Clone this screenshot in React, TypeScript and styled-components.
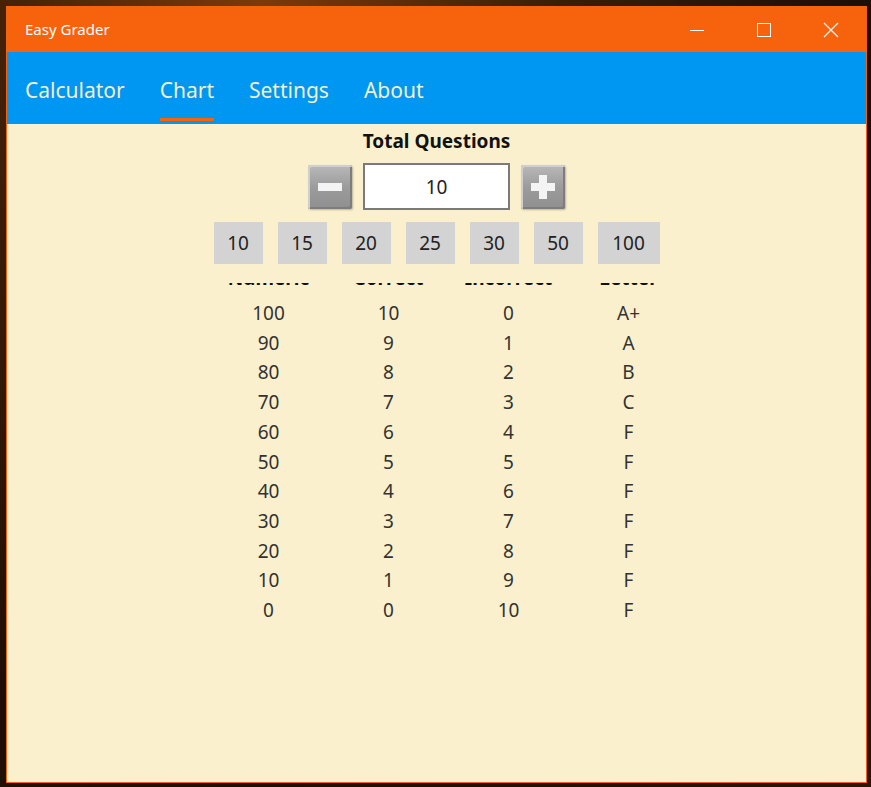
import styled, { createGlobalStyle } from "styled-components";

const GlobalStyle = createGlobalStyle`
  html, body {
    margin: 0;
    padding: 0;
    height: 100%;
  }
  body {
    background: radial-gradient(ellipse at 30% 0%, #7a3a0c 0%, #3b1d08 35%, #1e0e04 70%, #2a1507 100%);
    font-family: "Segoe UI", "Noto Sans", "Open Sans", sans-serif;
    overflow: hidden;
  }
`;

const Window = styled.div`
  display: flex;
  flex-direction: column;
  width: 861px;
  height: 777px;
  margin: 6px 0 0 6px;
  box-sizing: border-box;
  border: 1px solid #f7630c;
  background: #faf0cd;
`;

const TitleBar = styled.div`
  display: flex;
  align-items: center;
  height: 45px;
  flex-shrink: 0;
  background: #f7630c;
  color: #ffffff;
`;

const TitleText = styled.div`
  flex: 1;
  padding-left: 18px;
  font-size: 15px;
  margin-top: -1px;
`;

const CaptionButton = styled.div`
  display: flex;
  align-items: center;
  justify-content: center;
  width: 67px;
  height: 45px;
`;

const NavBar = styled.div`
  display: flex;
  align-items: stretch;
  height: 72px;
  flex-shrink: 0;
  padding-left: 18px;
  gap: 35px;
  background: #0097f2;
`;

const NavItem = styled.div<{ $active?: boolean }>`
  position: relative;
  display: flex;
  align-items: center;
  font-size: 21px;
  color: #f3eec9;
  padding-top: 4px;

  &::after {
    content: "";
    display: ${(p) => (p.$active ? "block" : "none")};
    position: absolute;
    left: 0;
    right: 0;
    bottom: 3px;
    height: 3px;
    background: #f7630c;
  }
`;

const Content = styled.div`
  flex: 1;
  display: flex;
  flex-direction: column;
  align-items: center;
  min-height: 0;
`;

const Heading = styled.div`
  margin-top: 5px;
  font-size: 19px;
  font-weight: 700;
  line-height: 24px;
  color: #111;
`;

const Stepper = styled.div`
  display: flex;
  align-items: center;
  margin-top: 10px;
  gap: 11px;
`;

const StepButton = styled.div`
  display: flex;
  align-items: center;
  justify-content: center;
  width: 44px;
  height: 44px;
  box-sizing: border-box;
  border-radius: 2px;
  background: linear-gradient(180deg, #b9b9b9 0%, #9c9c9c 50%, #8f8f8f 100%);
  box-shadow: inset 2px 2px 0 #cfcfcf, inset -2px -2px 0 #7d7d7d, 1px 1px 2px rgba(0, 0, 0, 0.25);
`;

const CountInput = styled.div`
  width: 147px;
  height: 47px;
  box-sizing: border-box;
  border: 2px solid #7a7a7a;
  background: #ffffff;
  display: flex;
  align-items: center;
  justify-content: center;
  font-size: 19px;
  color: #222;
`;

const Presets = styled.div`
  display: flex;
  gap: 15px;
  margin-top: 12px;
`;

const Preset = styled.div<{ $wide?: boolean }>`
  display: flex;
  align-items: center;
  justify-content: center;
  min-width: ${(p) => (p.$wide ? "62px" : "49px")};
  height: 42px;
  background: #d3d3d3;
  font-size: 19px;
  color: #222;
`;

const TableClip = styled.div`
  margin-top: 19px;
  padding-left: 24px;
  flex: 1;
  overflow: hidden;
`;

const Grid = styled.div`
  display: grid;
  grid-template-columns: repeat(4, 120px);
  text-align: center;
`;

const HeadCell = styled.div`
  margin-top: -17px;
  height: 33px;
  font-size: 19px;
  font-weight: 700;
  line-height: 24px;
  color: #111;
`;

const Cell = styled.div`
  font-size: 19px;
  line-height: 29.7px;
  color: #333;
`;

const rows: [number, number, number, string][] = [
  [100, 10, 0, "A+"],
  [90, 9, 1, "A"],
  [80, 8, 2, "B"],
  [70, 7, 3, "C"],
  [60, 6, 4, "F"],
  [50, 5, 5, "F"],
  [40, 4, 6, "F"],
  [30, 3, 7, "F"],
  [20, 2, 8, "F"],
  [10, 1, 9, "F"],
  [0, 0, 10, "F"],
];

const presets = [10, 15, 20, 25, 30, 50, 100];

export default function App() {
  return (
    <>
      <GlobalStyle />
      <Window>
        <TitleBar>
          <TitleText>Easy Grader</TitleText>
          <CaptionButton>
            <svg width="16" height="16" viewBox="0 0 16 16">
              <line x1="1" y1="8.5" x2="15" y2="8.5" stroke="#fff" strokeWidth="1" />
            </svg>
          </CaptionButton>
          <CaptionButton>
            <svg width="16" height="16" viewBox="0 0 16 16">
              <rect x="1.5" y="1.5" width="13" height="13" fill="none" stroke="#fff" strokeWidth="1" />
            </svg>
          </CaptionButton>
          <CaptionButton>
            <svg width="16" height="16" viewBox="0 0 16 16">
              <path d="M1 1 L15 15 M15 1 L1 15" stroke="#fff" strokeWidth="1.1" />
            </svg>
          </CaptionButton>
          <div style={{ width: 2 }} />
        </TitleBar>
        <NavBar>
          <NavItem>Calculator</NavItem>
          <NavItem $active>Chart</NavItem>
          <NavItem>Settings</NavItem>
          <NavItem>About</NavItem>
        </NavBar>
        <Content>
          <Heading>Total Questions</Heading>
          <Stepper>
            <StepButton>
              <svg width="30" height="30" viewBox="0 0 30 30">
                <rect x="3" y="11" width="24" height="8" fill="#f4f4f4" />
              </svg>
            </StepButton>
            <CountInput>10</CountInput>
            <StepButton>
              <svg width="30" height="30" viewBox="0 0 30 30">
                <rect x="3" y="11" width="24" height="8" fill="#f4f4f4" />
                <rect x="11" y="3" width="8" height="24" fill="#f4f4f4" />
              </svg>
            </StepButton>
          </Stepper>
          <Presets>
            {presets.map((p) => (
              <Preset key={p} $wide={p >= 100}>
                {p}
              </Preset>
            ))}
          </Presets>
          <TableClip>
            <Grid>
              <HeadCell>Numeric</HeadCell>
              <HeadCell>Correct</HeadCell>
              <HeadCell>Incorrect</HeadCell>
              <HeadCell>Letter</HeadCell>
              {rows.map((r) => (
                <>
                  <Cell key={`n${r[0]}`}>{r[0]}</Cell>
                  <Cell key={`c${r[0]}`}>{r[1]}</Cell>
                  <Cell key={`i${r[0]}`}>{r[2]}</Cell>
                  <Cell key={`l${r[0]}`}>{r[3]}</Cell>
                </>
              ))}
            </Grid>
          </TableClip>
        </Content>
      </Window>
    </>
  );
}
